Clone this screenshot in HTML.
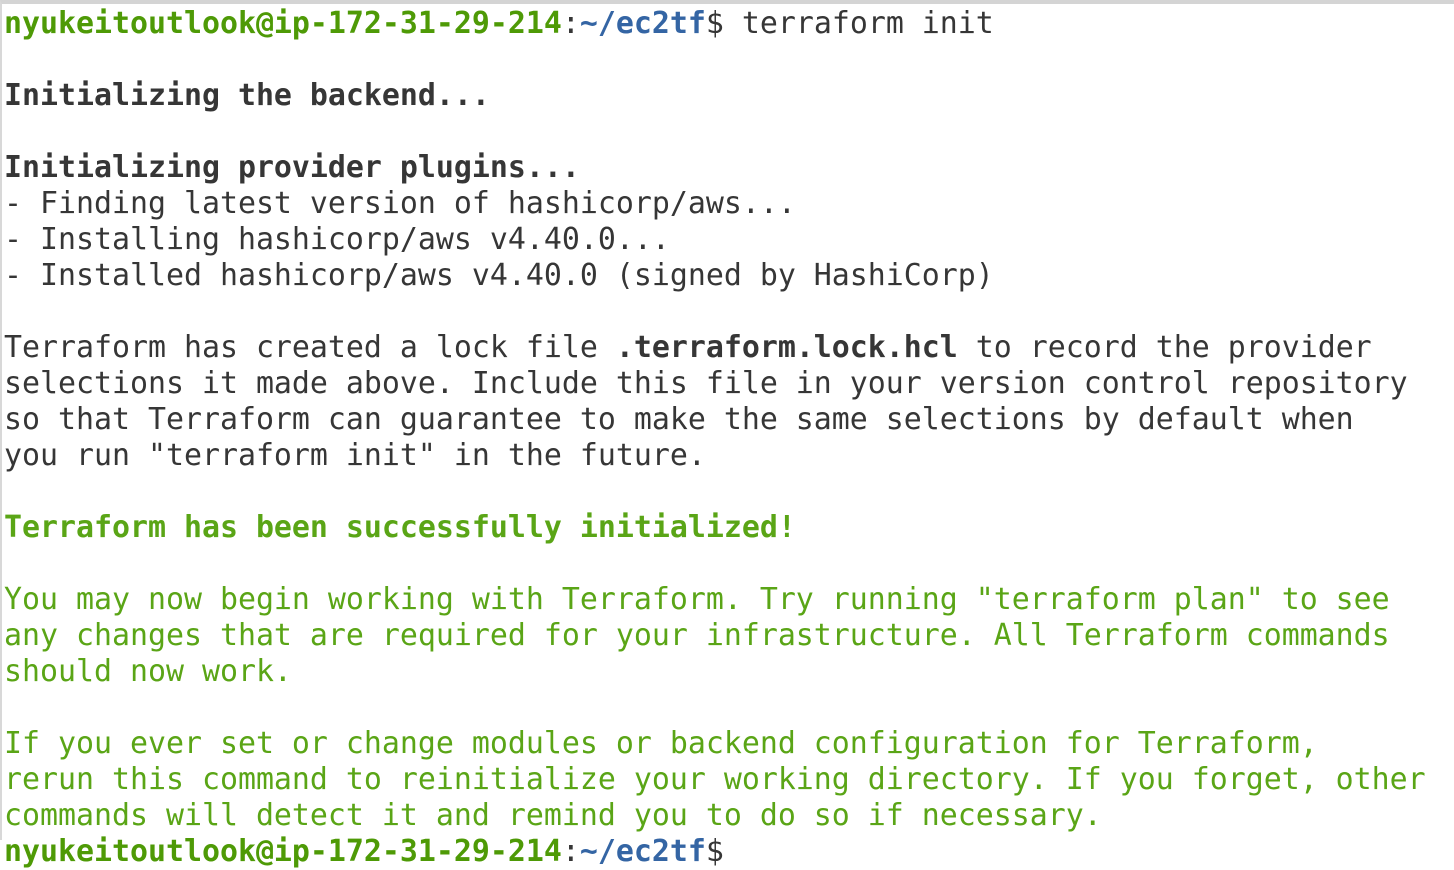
<!DOCTYPE html>
<html><head><meta charset="utf-8"><style>
html,body{margin:0;padding:0;background:#fff;width:1454px;height:840px;overflow:hidden}
body{border-top:4px solid #d4d4d4;border-left:2px solid #d8d8d8;box-sizing:border-box}
pre{margin:0;position:absolute;top:6px;left:4px;font-family:"DejaVu Sans Mono","Liberation Mono",monospace;font-size:29.9px;line-height:36px;color:#363636;white-space:pre}
.g{color:#4e9a06}.b{color:#3465a4}.B{font-weight:bold}
.lg{color:#5aa516}
</style></head><body>
<pre><span class="g B">nyukeitoutlook@ip-172-31-29-214</span>:<span class="b B">~/ec2tf</span>$ terraform init

<span class="B">Initializing the backend...</span>

<span class="B">Initializing provider plugins...</span>
- Finding latest version of hashicorp/aws...
- Installing hashicorp/aws v4.40.0...
- Installed hashicorp/aws v4.40.0 (signed by HashiCorp)

Terraform has created a lock file <span class="B">.terraform.lock.hcl</span> to record the provider
selections it made above. Include this file in your version control repository
so that Terraform can guarantee to make the same selections by default when
you run "terraform init" in the future.

<span class="lg B">Terraform has been successfully initialized!</span>
<span class="lg">
You may now begin working with Terraform. Try running "terraform plan" to see
any changes that are required for your infrastructure. All Terraform commands
should now work.

If you ever set or change modules or backend configuration for Terraform,
rerun this command to reinitialize your working directory. If you forget, other
commands will detect it and remind you to do so if necessary.</span>
<span class="g B">nyukeitoutlook@ip-172-31-29-214</span>:<span class="b B">~/ec2tf</span>$ </pre>
</body></html>
